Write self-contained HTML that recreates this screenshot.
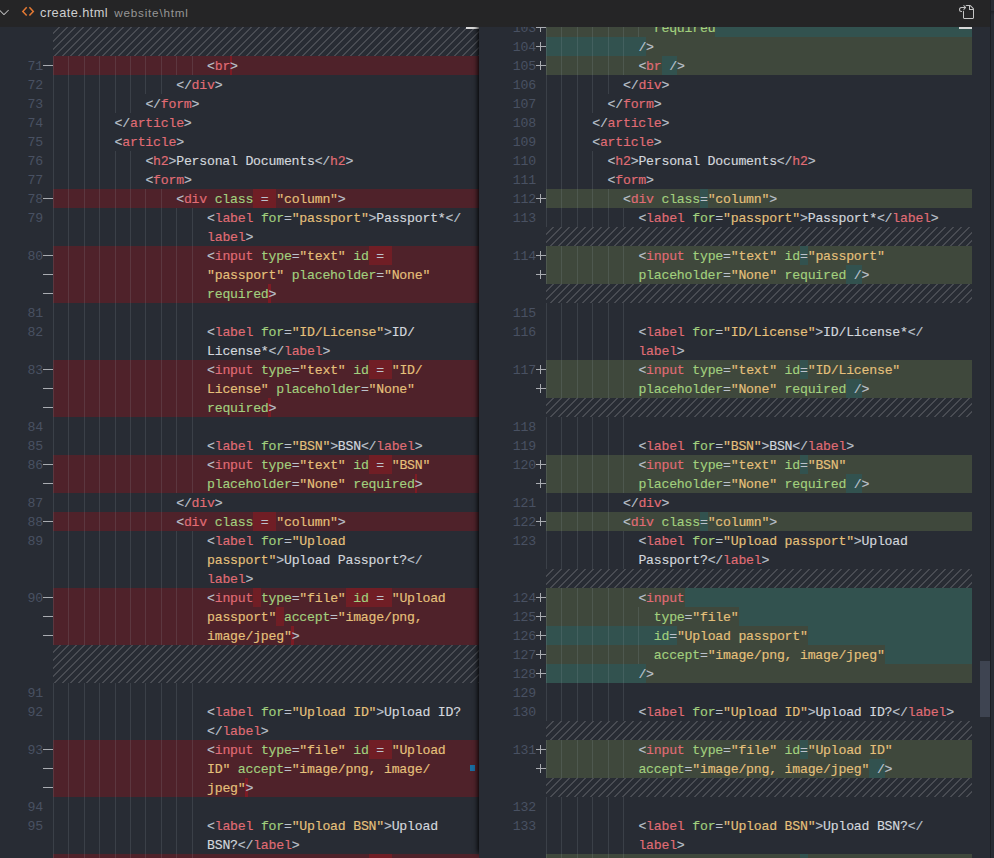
<!DOCTYPE html>
<html lang="en"><head><meta charset="utf-8"><title>create.html diff</title>
<style>
html,body{margin:0;padding:0;background:#282c34;}
body{width:994px;height:858px;overflow:hidden;position:relative;font-family:"Liberation Mono","DejaVu Sans Mono",monospace;}
#ed{position:absolute;left:0;top:0;width:994px;height:858px;overflow:hidden;background:#282c34;}
#hd{position:absolute;left:0;top:0;width:990px;height:26px;background:#252526;z-index:10;border-bottom:1px solid #252527;overflow:hidden;}
#edge{position:absolute;left:990px;top:0;width:4px;height:858px;background:#282c34;z-index:11;border-left:1px solid #1c1f24;box-sizing:border-box;}
#edge i{position:absolute;left:0;top:11px;width:3px;height:4px;background:linear-gradient(#1d2026,#282c34);}
#hd .ttl{position:absolute;left:40.1px;top:0;line-height:25px;font-family:"Liberation Sans",sans-serif;font-size:12.8px;color:#cfcfcf;white-space:pre;letter-spacing:0.43px;}
#hd .sub{position:absolute;left:114.3px;top:0;line-height:25.5px;font-family:"Liberation Sans",sans-serif;font-size:11.7px;color:#969696;white-space:pre;letter-spacing:0.78px;}
.cl{position:absolute;height:19px;line-height:19px;font-size:13.2px;letter-spacing:-0.2213px;white-space:pre;color:#d3d7dd;-webkit-text-stroke:0.15px;}
.p{color:#bcc2cc}.t{color:#e06c75}.a{color:#a2d07e}.s{color:#e5c07b}.x{color:#d3d7dd}
.ln{position:absolute;height:19px;line-height:19px;font-size:13.2px;letter-spacing:-0.2213px;color:#495162;white-space:pre;}
.mh{position:absolute;width:9.8px;height:1px;background:#a9acb1;}
.mv{position:absolute;width:1px;height:9px;background:#a9acb1;}
.rm{position:absolute;height:19px;background:#4f222a;}
.rmc{position:absolute;height:19px;background:#701e25;}
.rmc.sl{background:#7d1b24;}
.ad{position:absolute;height:19px;background:#3f483c;}
.adc{position:absolute;height:19px;background:#32524f;}
.hatch{position:absolute;background-image:linear-gradient(-45deg,rgba(204,204,204,.2) 12.5%,transparent 12.5%,transparent 50%,rgba(204,204,204,.2) 50%,rgba(204,204,204,.2) 62.5%,transparent 62.5%,transparent 100%);background-size:8px 8px;}
.g{position:absolute;width:1px;height:19px;background:rgba(171,178,191,.15);}
#rp{position:absolute;left:479px;top:0;width:515px;height:858px;background:#282c34;box-shadow:-6px 0 5px -5px #000;}
</style></head><body>
<div id="ed">
<div id="lp">
<div class="hatch" style="left:53px;top:18px;width:426px;height:38px"></div>
<div class="rm" style="left:53px;top:56px;width:426px"></div>
<div class="rmc sl" style="left:229.8px;top:56px;width:2.6px"></div>
<i class="g" style="left:53px;top:56px"></i>
<i class="g" style="left:68px;top:56px"></i>
<i class="g" style="left:84px;top:56px"></i>
<i class="g" style="left:99px;top:56px"></i>
<i class="g" style="left:115px;top:56px"></i>
<i class="g" style="left:130px;top:56px"></i>
<i class="g" style="left:145px;top:56px"></i>
<i class="g" style="left:161px;top:56px"></i>
<i class="g" style="left:176px;top:56px"></i>
<i class="g" style="left:192px;top:56px"></i>
<span class="ln" style="right:951.1px;top:57px">71</span>
<i class="mh" style="left:43.2px;top:65px"></i>
<div class="cl" style="left:207px;top:57px"><span class="p">&lt;</span><span class="t">br</span><span class="p">&gt;</span></div>
<i class="g" style="left:53px;top:75px"></i>
<i class="g" style="left:68px;top:75px"></i>
<i class="g" style="left:84px;top:75px"></i>
<i class="g" style="left:99px;top:75px"></i>
<i class="g" style="left:115px;top:75px"></i>
<i class="g" style="left:130px;top:75px"></i>
<i class="g" style="left:145px;top:75px"></i>
<i class="g" style="left:161px;top:75px"></i>
<span class="ln" style="right:951.1px;top:76px">72</span>
<div class="cl" style="left:176.2px;top:76px"><span class="p">&lt;/</span><span class="t">div</span><span class="p">&gt;</span></div>
<i class="g" style="left:53px;top:94px"></i>
<i class="g" style="left:68px;top:94px"></i>
<i class="g" style="left:84px;top:94px"></i>
<i class="g" style="left:99px;top:94px"></i>
<i class="g" style="left:115px;top:94px"></i>
<i class="g" style="left:130px;top:94px"></i>
<span class="ln" style="right:951.1px;top:95px">73</span>
<div class="cl" style="left:145.4px;top:95px"><span class="p">&lt;/</span><span class="t">form</span><span class="p">&gt;</span></div>
<i class="g" style="left:53px;top:113px"></i>
<i class="g" style="left:68px;top:113px"></i>
<i class="g" style="left:84px;top:113px"></i>
<i class="g" style="left:99px;top:113px"></i>
<span class="ln" style="right:951.1px;top:114px">74</span>
<div class="cl" style="left:114.6px;top:114px"><span class="p">&lt;/</span><span class="t">article</span><span class="p">&gt;</span></div>
<i class="g" style="left:53px;top:132px"></i>
<i class="g" style="left:68px;top:132px"></i>
<i class="g" style="left:84px;top:132px"></i>
<i class="g" style="left:99px;top:132px"></i>
<span class="ln" style="right:951.1px;top:133px">75</span>
<div class="cl" style="left:114.6px;top:133px"><span class="p">&lt;</span><span class="t">article</span><span class="p">&gt;</span></div>
<i class="g" style="left:53px;top:151px"></i>
<i class="g" style="left:68px;top:151px"></i>
<i class="g" style="left:84px;top:151px"></i>
<i class="g" style="left:99px;top:151px"></i>
<i class="g" style="left:115px;top:151px"></i>
<i class="g" style="left:130px;top:151px"></i>
<span class="ln" style="right:951.1px;top:152px">76</span>
<div class="cl" style="left:145.4px;top:152px"><span class="p">&lt;</span><span class="t">h2</span><span class="p">&gt;</span><span class="x">Personal Documents</span><span class="p">&lt;/</span><span class="t">h2</span><span class="p">&gt;</span></div>
<i class="g" style="left:53px;top:170px"></i>
<i class="g" style="left:68px;top:170px"></i>
<i class="g" style="left:84px;top:170px"></i>
<i class="g" style="left:99px;top:170px"></i>
<i class="g" style="left:115px;top:170px"></i>
<i class="g" style="left:130px;top:170px"></i>
<span class="ln" style="right:951.1px;top:171px">77</span>
<div class="cl" style="left:145.4px;top:171px"><span class="p">&lt;</span><span class="t">form</span><span class="p">&gt;</span></div>
<div class="rm" style="left:53px;top:189px;width:426px"></div>
<div class="rmc" style="left:253.2px;top:189px;width:23.1px"></div>
<i class="g" style="left:53px;top:189px"></i>
<i class="g" style="left:68px;top:189px"></i>
<i class="g" style="left:84px;top:189px"></i>
<i class="g" style="left:99px;top:189px"></i>
<i class="g" style="left:115px;top:189px"></i>
<i class="g" style="left:130px;top:189px"></i>
<i class="g" style="left:145px;top:189px"></i>
<i class="g" style="left:161px;top:189px"></i>
<span class="ln" style="right:951.1px;top:190px">78</span>
<i class="mh" style="left:43.2px;top:198px"></i>
<div class="cl" style="left:176.2px;top:190px"><span class="p">&lt;</span><span class="t">div</span><span class="x"> </span><span class="a">class</span><span class="x"> </span><span class="p">=</span><span class="x"> </span><span class="s">"column"</span><span class="p">&gt;</span></div>
<i class="g" style="left:53px;top:208px"></i>
<i class="g" style="left:68px;top:208px"></i>
<i class="g" style="left:84px;top:208px"></i>
<i class="g" style="left:99px;top:208px"></i>
<i class="g" style="left:115px;top:208px"></i>
<i class="g" style="left:130px;top:208px"></i>
<i class="g" style="left:145px;top:208px"></i>
<i class="g" style="left:161px;top:208px"></i>
<i class="g" style="left:176px;top:208px"></i>
<i class="g" style="left:192px;top:208px"></i>
<span class="ln" style="right:951.1px;top:209px">79</span>
<div class="cl" style="left:207px;top:209px"><span class="p">&lt;</span><span class="t">label</span><span class="x"> </span><span class="a">for</span><span class="p">=</span><span class="s">"passport"</span><span class="p">&gt;</span><span class="x">Passport*</span><span class="p">&lt;/</span></div>
<i class="g" style="left:53px;top:227px"></i>
<i class="g" style="left:68px;top:227px"></i>
<i class="g" style="left:84px;top:227px"></i>
<i class="g" style="left:99px;top:227px"></i>
<i class="g" style="left:115px;top:227px"></i>
<i class="g" style="left:130px;top:227px"></i>
<i class="g" style="left:145px;top:227px"></i>
<i class="g" style="left:161px;top:227px"></i>
<i class="g" style="left:176px;top:227px"></i>
<i class="g" style="left:192px;top:227px"></i>
<div class="cl" style="left:207px;top:228px"><span class="t">label</span><span class="p">&gt;</span></div>
<div class="rm" style="left:53px;top:246px;width:426px"></div>
<div class="rmc" style="left:368.7px;top:246px;width:23.1px"></div>
<i class="g" style="left:53px;top:246px"></i>
<i class="g" style="left:68px;top:246px"></i>
<i class="g" style="left:84px;top:246px"></i>
<i class="g" style="left:99px;top:246px"></i>
<i class="g" style="left:115px;top:246px"></i>
<i class="g" style="left:130px;top:246px"></i>
<i class="g" style="left:145px;top:246px"></i>
<i class="g" style="left:161px;top:246px"></i>
<i class="g" style="left:176px;top:246px"></i>
<i class="g" style="left:192px;top:246px"></i>
<span class="ln" style="right:951.1px;top:247px">80</span>
<i class="mh" style="left:43.2px;top:255px"></i>
<div class="cl" style="left:207px;top:247px"><span class="p">&lt;</span><span class="t">input</span><span class="x"> </span><span class="a">type</span><span class="p">=</span><span class="s">"text"</span><span class="x"> </span><span class="a">id</span><span class="x"> </span><span class="p">=</span><span class="x"> </span></div>
<div class="rm" style="left:53px;top:265px;width:426px"></div>
<i class="g" style="left:53px;top:265px"></i>
<i class="g" style="left:68px;top:265px"></i>
<i class="g" style="left:84px;top:265px"></i>
<i class="g" style="left:99px;top:265px"></i>
<i class="g" style="left:115px;top:265px"></i>
<i class="g" style="left:130px;top:265px"></i>
<i class="g" style="left:145px;top:265px"></i>
<i class="g" style="left:161px;top:265px"></i>
<i class="g" style="left:176px;top:265px"></i>
<i class="g" style="left:192px;top:265px"></i>
<i class="mh" style="left:43.2px;top:274px"></i>
<div class="cl" style="left:207px;top:266px"><span class="s">"passport"</span><span class="x"> </span><span class="a">placeholder</span><span class="p">=</span><span class="s">"None"</span><span class="x"> </span></div>
<div class="rm" style="left:53px;top:284px;width:426px"></div>
<div class="rmc sl" style="left:268.3px;top:284px;width:2.6px"></div>
<i class="g" style="left:53px;top:284px"></i>
<i class="g" style="left:68px;top:284px"></i>
<i class="g" style="left:84px;top:284px"></i>
<i class="g" style="left:99px;top:284px"></i>
<i class="g" style="left:115px;top:284px"></i>
<i class="g" style="left:130px;top:284px"></i>
<i class="g" style="left:145px;top:284px"></i>
<i class="g" style="left:161px;top:284px"></i>
<i class="g" style="left:176px;top:284px"></i>
<i class="g" style="left:192px;top:284px"></i>
<i class="mh" style="left:43.2px;top:293px"></i>
<div class="cl" style="left:207px;top:285px"><span class="a">required</span><span class="p">&gt;</span></div>
<i class="g" style="left:53px;top:303px"></i>
<i class="g" style="left:68px;top:303px"></i>
<i class="g" style="left:84px;top:303px"></i>
<i class="g" style="left:99px;top:303px"></i>
<i class="g" style="left:115px;top:303px"></i>
<i class="g" style="left:130px;top:303px"></i>
<i class="g" style="left:145px;top:303px"></i>
<i class="g" style="left:161px;top:303px"></i>
<i class="g" style="left:176px;top:303px"></i>
<i class="g" style="left:192px;top:303px"></i>
<span class="ln" style="right:951.1px;top:304px">81</span>
<i class="g" style="left:53px;top:322px"></i>
<i class="g" style="left:68px;top:322px"></i>
<i class="g" style="left:84px;top:322px"></i>
<i class="g" style="left:99px;top:322px"></i>
<i class="g" style="left:115px;top:322px"></i>
<i class="g" style="left:130px;top:322px"></i>
<i class="g" style="left:145px;top:322px"></i>
<i class="g" style="left:161px;top:322px"></i>
<i class="g" style="left:176px;top:322px"></i>
<i class="g" style="left:192px;top:322px"></i>
<span class="ln" style="right:951.1px;top:323px">82</span>
<div class="cl" style="left:207px;top:323px"><span class="p">&lt;</span><span class="t">label</span><span class="x"> </span><span class="a">for</span><span class="p">=</span><span class="s">"ID/License"</span><span class="p">&gt;</span><span class="x">ID/</span></div>
<i class="g" style="left:53px;top:341px"></i>
<i class="g" style="left:68px;top:341px"></i>
<i class="g" style="left:84px;top:341px"></i>
<i class="g" style="left:99px;top:341px"></i>
<i class="g" style="left:115px;top:341px"></i>
<i class="g" style="left:130px;top:341px"></i>
<i class="g" style="left:145px;top:341px"></i>
<i class="g" style="left:161px;top:341px"></i>
<i class="g" style="left:176px;top:341px"></i>
<i class="g" style="left:192px;top:341px"></i>
<div class="cl" style="left:207px;top:342px"><span class="x">License*</span><span class="p">&lt;/</span><span class="t">label</span><span class="p">&gt;</span></div>
<div class="rm" style="left:53px;top:360px;width:426px"></div>
<div class="rmc" style="left:368.7px;top:360px;width:23.1px"></div>
<i class="g" style="left:53px;top:360px"></i>
<i class="g" style="left:68px;top:360px"></i>
<i class="g" style="left:84px;top:360px"></i>
<i class="g" style="left:99px;top:360px"></i>
<i class="g" style="left:115px;top:360px"></i>
<i class="g" style="left:130px;top:360px"></i>
<i class="g" style="left:145px;top:360px"></i>
<i class="g" style="left:161px;top:360px"></i>
<i class="g" style="left:176px;top:360px"></i>
<i class="g" style="left:192px;top:360px"></i>
<span class="ln" style="right:951.1px;top:361px">83</span>
<i class="mh" style="left:43.2px;top:369px"></i>
<div class="cl" style="left:207px;top:361px"><span class="p">&lt;</span><span class="t">input</span><span class="x"> </span><span class="a">type</span><span class="p">=</span><span class="s">"text"</span><span class="x"> </span><span class="a">id</span><span class="x"> </span><span class="p">=</span><span class="x"> </span><span class="s">"ID/</span></div>
<div class="rm" style="left:53px;top:379px;width:426px"></div>
<i class="g" style="left:53px;top:379px"></i>
<i class="g" style="left:68px;top:379px"></i>
<i class="g" style="left:84px;top:379px"></i>
<i class="g" style="left:99px;top:379px"></i>
<i class="g" style="left:115px;top:379px"></i>
<i class="g" style="left:130px;top:379px"></i>
<i class="g" style="left:145px;top:379px"></i>
<i class="g" style="left:161px;top:379px"></i>
<i class="g" style="left:176px;top:379px"></i>
<i class="g" style="left:192px;top:379px"></i>
<i class="mh" style="left:43.2px;top:388px"></i>
<div class="cl" style="left:207px;top:380px"><span class="s">License"</span><span class="x"> </span><span class="a">placeholder</span><span class="p">=</span><span class="s">"None"</span><span class="x"> </span></div>
<div class="rm" style="left:53px;top:398px;width:426px"></div>
<div class="rmc sl" style="left:268.3px;top:398px;width:2.6px"></div>
<i class="g" style="left:53px;top:398px"></i>
<i class="g" style="left:68px;top:398px"></i>
<i class="g" style="left:84px;top:398px"></i>
<i class="g" style="left:99px;top:398px"></i>
<i class="g" style="left:115px;top:398px"></i>
<i class="g" style="left:130px;top:398px"></i>
<i class="g" style="left:145px;top:398px"></i>
<i class="g" style="left:161px;top:398px"></i>
<i class="g" style="left:176px;top:398px"></i>
<i class="g" style="left:192px;top:398px"></i>
<i class="mh" style="left:43.2px;top:407px"></i>
<div class="cl" style="left:207px;top:399px"><span class="a">required</span><span class="p">&gt;</span></div>
<i class="g" style="left:53px;top:417px"></i>
<i class="g" style="left:68px;top:417px"></i>
<i class="g" style="left:84px;top:417px"></i>
<i class="g" style="left:99px;top:417px"></i>
<i class="g" style="left:115px;top:417px"></i>
<i class="g" style="left:130px;top:417px"></i>
<i class="g" style="left:145px;top:417px"></i>
<i class="g" style="left:161px;top:417px"></i>
<i class="g" style="left:176px;top:417px"></i>
<i class="g" style="left:192px;top:417px"></i>
<span class="ln" style="right:951.1px;top:418px">84</span>
<i class="g" style="left:53px;top:436px"></i>
<i class="g" style="left:68px;top:436px"></i>
<i class="g" style="left:84px;top:436px"></i>
<i class="g" style="left:99px;top:436px"></i>
<i class="g" style="left:115px;top:436px"></i>
<i class="g" style="left:130px;top:436px"></i>
<i class="g" style="left:145px;top:436px"></i>
<i class="g" style="left:161px;top:436px"></i>
<i class="g" style="left:176px;top:436px"></i>
<i class="g" style="left:192px;top:436px"></i>
<span class="ln" style="right:951.1px;top:437px">85</span>
<div class="cl" style="left:207px;top:437px"><span class="p">&lt;</span><span class="t">label</span><span class="x"> </span><span class="a">for</span><span class="p">=</span><span class="s">"BSN"</span><span class="p">&gt;</span><span class="x">BSN</span><span class="p">&lt;/</span><span class="t">label</span><span class="p">&gt;</span></div>
<div class="rm" style="left:53px;top:455px;width:426px"></div>
<div class="rmc" style="left:368.7px;top:455px;width:23.1px"></div>
<i class="g" style="left:53px;top:455px"></i>
<i class="g" style="left:68px;top:455px"></i>
<i class="g" style="left:84px;top:455px"></i>
<i class="g" style="left:99px;top:455px"></i>
<i class="g" style="left:115px;top:455px"></i>
<i class="g" style="left:130px;top:455px"></i>
<i class="g" style="left:145px;top:455px"></i>
<i class="g" style="left:161px;top:455px"></i>
<i class="g" style="left:176px;top:455px"></i>
<i class="g" style="left:192px;top:455px"></i>
<span class="ln" style="right:951.1px;top:456px">86</span>
<i class="mh" style="left:43.2px;top:464px"></i>
<div class="cl" style="left:207px;top:456px"><span class="p">&lt;</span><span class="t">input</span><span class="x"> </span><span class="a">type</span><span class="p">=</span><span class="s">"text"</span><span class="x"> </span><span class="a">id</span><span class="x"> </span><span class="p">=</span><span class="x"> </span><span class="s">"BSN"</span><span class="x"> </span></div>
<div class="rm" style="left:53px;top:474px;width:426px"></div>
<div class="rmc sl" style="left:414.6px;top:474px;width:2.6px"></div>
<i class="g" style="left:53px;top:474px"></i>
<i class="g" style="left:68px;top:474px"></i>
<i class="g" style="left:84px;top:474px"></i>
<i class="g" style="left:99px;top:474px"></i>
<i class="g" style="left:115px;top:474px"></i>
<i class="g" style="left:130px;top:474px"></i>
<i class="g" style="left:145px;top:474px"></i>
<i class="g" style="left:161px;top:474px"></i>
<i class="g" style="left:176px;top:474px"></i>
<i class="g" style="left:192px;top:474px"></i>
<i class="mh" style="left:43.2px;top:483px"></i>
<div class="cl" style="left:207px;top:475px"><span class="a">placeholder</span><span class="p">=</span><span class="s">"None"</span><span class="x"> </span><span class="a">required</span><span class="p">&gt;</span></div>
<i class="g" style="left:53px;top:493px"></i>
<i class="g" style="left:68px;top:493px"></i>
<i class="g" style="left:84px;top:493px"></i>
<i class="g" style="left:99px;top:493px"></i>
<i class="g" style="left:115px;top:493px"></i>
<i class="g" style="left:130px;top:493px"></i>
<i class="g" style="left:145px;top:493px"></i>
<i class="g" style="left:161px;top:493px"></i>
<span class="ln" style="right:951.1px;top:494px">87</span>
<div class="cl" style="left:176.2px;top:494px"><span class="p">&lt;/</span><span class="t">div</span><span class="p">&gt;</span></div>
<div class="rm" style="left:53px;top:512px;width:426px"></div>
<div class="rmc" style="left:253.2px;top:512px;width:23.1px"></div>
<i class="g" style="left:53px;top:512px"></i>
<i class="g" style="left:68px;top:512px"></i>
<i class="g" style="left:84px;top:512px"></i>
<i class="g" style="left:99px;top:512px"></i>
<i class="g" style="left:115px;top:512px"></i>
<i class="g" style="left:130px;top:512px"></i>
<i class="g" style="left:145px;top:512px"></i>
<i class="g" style="left:161px;top:512px"></i>
<span class="ln" style="right:951.1px;top:513px">88</span>
<i class="mh" style="left:43.2px;top:521px"></i>
<div class="cl" style="left:176.2px;top:513px"><span class="p">&lt;</span><span class="t">div</span><span class="x"> </span><span class="a">class</span><span class="x"> </span><span class="p">=</span><span class="x"> </span><span class="s">"column"</span><span class="p">&gt;</span></div>
<i class="g" style="left:53px;top:531px"></i>
<i class="g" style="left:68px;top:531px"></i>
<i class="g" style="left:84px;top:531px"></i>
<i class="g" style="left:99px;top:531px"></i>
<i class="g" style="left:115px;top:531px"></i>
<i class="g" style="left:130px;top:531px"></i>
<i class="g" style="left:145px;top:531px"></i>
<i class="g" style="left:161px;top:531px"></i>
<i class="g" style="left:176px;top:531px"></i>
<i class="g" style="left:192px;top:531px"></i>
<span class="ln" style="right:951.1px;top:532px">89</span>
<div class="cl" style="left:207px;top:532px"><span class="p">&lt;</span><span class="t">label</span><span class="x"> </span><span class="a">for</span><span class="p">=</span><span class="s">"Upload </span></div>
<i class="g" style="left:53px;top:550px"></i>
<i class="g" style="left:68px;top:550px"></i>
<i class="g" style="left:84px;top:550px"></i>
<i class="g" style="left:99px;top:550px"></i>
<i class="g" style="left:115px;top:550px"></i>
<i class="g" style="left:130px;top:550px"></i>
<i class="g" style="left:145px;top:550px"></i>
<i class="g" style="left:161px;top:550px"></i>
<i class="g" style="left:176px;top:550px"></i>
<i class="g" style="left:192px;top:550px"></i>
<div class="cl" style="left:207px;top:551px"><span class="s">passport"</span><span class="p">&gt;</span><span class="x">Upload Passport?</span><span class="p">&lt;/</span></div>
<i class="g" style="left:53px;top:569px"></i>
<i class="g" style="left:68px;top:569px"></i>
<i class="g" style="left:84px;top:569px"></i>
<i class="g" style="left:99px;top:569px"></i>
<i class="g" style="left:115px;top:569px"></i>
<i class="g" style="left:130px;top:569px"></i>
<i class="g" style="left:145px;top:569px"></i>
<i class="g" style="left:161px;top:569px"></i>
<i class="g" style="left:176px;top:569px"></i>
<i class="g" style="left:192px;top:569px"></i>
<div class="cl" style="left:207px;top:570px"><span class="t">label</span><span class="p">&gt;</span></div>
<div class="rm" style="left:53px;top:588px;width:426px"></div>
<div class="rmc" style="left:253.2px;top:588px;width:7.7px"></div>
<div class="rmc" style="left:345.6px;top:588px;width:46.2px"></div>
<i class="g" style="left:53px;top:588px"></i>
<i class="g" style="left:68px;top:588px"></i>
<i class="g" style="left:84px;top:588px"></i>
<i class="g" style="left:99px;top:588px"></i>
<i class="g" style="left:115px;top:588px"></i>
<i class="g" style="left:130px;top:588px"></i>
<i class="g" style="left:145px;top:588px"></i>
<i class="g" style="left:161px;top:588px"></i>
<i class="g" style="left:176px;top:588px"></i>
<i class="g" style="left:192px;top:588px"></i>
<span class="ln" style="right:951.1px;top:589px">90</span>
<i class="mh" style="left:43.2px;top:597px"></i>
<div class="cl" style="left:207px;top:589px"><span class="p">&lt;</span><span class="t">input</span><span class="x"> </span><span class="a">type</span><span class="p">=</span><span class="s">"file"</span><span class="x"> </span><span class="a">id</span><span class="x"> </span><span class="p">=</span><span class="x"> </span><span class="s">"Upload </span></div>
<div class="rm" style="left:53px;top:607px;width:426px"></div>
<div class="rmc" style="left:276.3px;top:607px;width:7.7px"></div>
<i class="g" style="left:53px;top:607px"></i>
<i class="g" style="left:68px;top:607px"></i>
<i class="g" style="left:84px;top:607px"></i>
<i class="g" style="left:99px;top:607px"></i>
<i class="g" style="left:115px;top:607px"></i>
<i class="g" style="left:130px;top:607px"></i>
<i class="g" style="left:145px;top:607px"></i>
<i class="g" style="left:161px;top:607px"></i>
<i class="g" style="left:176px;top:607px"></i>
<i class="g" style="left:192px;top:607px"></i>
<i class="mh" style="left:43.2px;top:616px"></i>
<div class="cl" style="left:207px;top:608px"><span class="s">passport"</span><span class="x"> </span><span class="a">accept</span><span class="p">=</span><span class="s">"image/png, </span></div>
<div class="rm" style="left:53px;top:626px;width:426px"></div>
<div class="rmc sl" style="left:291.4px;top:626px;width:2.6px"></div>
<i class="g" style="left:53px;top:626px"></i>
<i class="g" style="left:68px;top:626px"></i>
<i class="g" style="left:84px;top:626px"></i>
<i class="g" style="left:99px;top:626px"></i>
<i class="g" style="left:115px;top:626px"></i>
<i class="g" style="left:130px;top:626px"></i>
<i class="g" style="left:145px;top:626px"></i>
<i class="g" style="left:161px;top:626px"></i>
<i class="g" style="left:176px;top:626px"></i>
<i class="g" style="left:192px;top:626px"></i>
<i class="mh" style="left:43.2px;top:635px"></i>
<div class="cl" style="left:207px;top:627px"><span class="s">image/jpeg"</span><span class="p">&gt;</span></div>
<div class="hatch" style="left:53px;top:645px;width:426px;height:38px"></div>
<i class="g" style="left:53px;top:683px"></i>
<i class="g" style="left:68px;top:683px"></i>
<i class="g" style="left:84px;top:683px"></i>
<i class="g" style="left:99px;top:683px"></i>
<i class="g" style="left:115px;top:683px"></i>
<i class="g" style="left:130px;top:683px"></i>
<i class="g" style="left:145px;top:683px"></i>
<i class="g" style="left:161px;top:683px"></i>
<i class="g" style="left:176px;top:683px"></i>
<i class="g" style="left:192px;top:683px"></i>
<span class="ln" style="right:951.1px;top:684px">91</span>
<i class="g" style="left:53px;top:702px"></i>
<i class="g" style="left:68px;top:702px"></i>
<i class="g" style="left:84px;top:702px"></i>
<i class="g" style="left:99px;top:702px"></i>
<i class="g" style="left:115px;top:702px"></i>
<i class="g" style="left:130px;top:702px"></i>
<i class="g" style="left:145px;top:702px"></i>
<i class="g" style="left:161px;top:702px"></i>
<i class="g" style="left:176px;top:702px"></i>
<i class="g" style="left:192px;top:702px"></i>
<span class="ln" style="right:951.1px;top:703px">92</span>
<div class="cl" style="left:207px;top:703px"><span class="p">&lt;</span><span class="t">label</span><span class="x"> </span><span class="a">for</span><span class="p">=</span><span class="s">"Upload ID"</span><span class="p">&gt;</span><span class="x">Upload ID?</span></div>
<i class="g" style="left:53px;top:721px"></i>
<i class="g" style="left:68px;top:721px"></i>
<i class="g" style="left:84px;top:721px"></i>
<i class="g" style="left:99px;top:721px"></i>
<i class="g" style="left:115px;top:721px"></i>
<i class="g" style="left:130px;top:721px"></i>
<i class="g" style="left:145px;top:721px"></i>
<i class="g" style="left:161px;top:721px"></i>
<i class="g" style="left:176px;top:721px"></i>
<i class="g" style="left:192px;top:721px"></i>
<div class="cl" style="left:207px;top:722px"><span class="p">&lt;/</span><span class="t">label</span><span class="p">&gt;</span></div>
<div class="rm" style="left:53px;top:740px;width:426px"></div>
<div class="rmc" style="left:368.7px;top:740px;width:23.1px"></div>
<i class="g" style="left:53px;top:740px"></i>
<i class="g" style="left:68px;top:740px"></i>
<i class="g" style="left:84px;top:740px"></i>
<i class="g" style="left:99px;top:740px"></i>
<i class="g" style="left:115px;top:740px"></i>
<i class="g" style="left:130px;top:740px"></i>
<i class="g" style="left:145px;top:740px"></i>
<i class="g" style="left:161px;top:740px"></i>
<i class="g" style="left:176px;top:740px"></i>
<i class="g" style="left:192px;top:740px"></i>
<span class="ln" style="right:951.1px;top:741px">93</span>
<i class="mh" style="left:43.2px;top:749px"></i>
<div class="cl" style="left:207px;top:741px"><span class="p">&lt;</span><span class="t">input</span><span class="x"> </span><span class="a">type</span><span class="p">=</span><span class="s">"file"</span><span class="x"> </span><span class="a">id</span><span class="x"> </span><span class="p">=</span><span class="x"> </span><span class="s">"Upload </span></div>
<div class="rm" style="left:53px;top:759px;width:426px"></div>
<i class="g" style="left:53px;top:759px"></i>
<i class="g" style="left:68px;top:759px"></i>
<i class="g" style="left:84px;top:759px"></i>
<i class="g" style="left:99px;top:759px"></i>
<i class="g" style="left:115px;top:759px"></i>
<i class="g" style="left:130px;top:759px"></i>
<i class="g" style="left:145px;top:759px"></i>
<i class="g" style="left:161px;top:759px"></i>
<i class="g" style="left:176px;top:759px"></i>
<i class="g" style="left:192px;top:759px"></i>
<i class="mh" style="left:43.2px;top:768px"></i>
<div class="cl" style="left:207px;top:760px"><span class="s">ID"</span><span class="x"> </span><span class="a">accept</span><span class="p">=</span><span class="s">"image/png, image/</span></div>
<div class="rm" style="left:53px;top:778px;width:426px"></div>
<div class="rmc sl" style="left:245.2px;top:778px;width:2.6px"></div>
<i class="g" style="left:53px;top:778px"></i>
<i class="g" style="left:68px;top:778px"></i>
<i class="g" style="left:84px;top:778px"></i>
<i class="g" style="left:99px;top:778px"></i>
<i class="g" style="left:115px;top:778px"></i>
<i class="g" style="left:130px;top:778px"></i>
<i class="g" style="left:145px;top:778px"></i>
<i class="g" style="left:161px;top:778px"></i>
<i class="g" style="left:176px;top:778px"></i>
<i class="g" style="left:192px;top:778px"></i>
<i class="mh" style="left:43.2px;top:787px"></i>
<div class="cl" style="left:207px;top:779px"><span class="s">jpeg"</span><span class="p">&gt;</span></div>
<i class="g" style="left:53px;top:797px"></i>
<i class="g" style="left:68px;top:797px"></i>
<i class="g" style="left:84px;top:797px"></i>
<i class="g" style="left:99px;top:797px"></i>
<i class="g" style="left:115px;top:797px"></i>
<i class="g" style="left:130px;top:797px"></i>
<i class="g" style="left:145px;top:797px"></i>
<i class="g" style="left:161px;top:797px"></i>
<i class="g" style="left:176px;top:797px"></i>
<i class="g" style="left:192px;top:797px"></i>
<span class="ln" style="right:951.1px;top:798px">94</span>
<i class="g" style="left:53px;top:816px"></i>
<i class="g" style="left:68px;top:816px"></i>
<i class="g" style="left:84px;top:816px"></i>
<i class="g" style="left:99px;top:816px"></i>
<i class="g" style="left:115px;top:816px"></i>
<i class="g" style="left:130px;top:816px"></i>
<i class="g" style="left:145px;top:816px"></i>
<i class="g" style="left:161px;top:816px"></i>
<i class="g" style="left:176px;top:816px"></i>
<i class="g" style="left:192px;top:816px"></i>
<span class="ln" style="right:951.1px;top:817px">95</span>
<div class="cl" style="left:207px;top:817px"><span class="p">&lt;</span><span class="t">label</span><span class="x"> </span><span class="a">for</span><span class="p">=</span><span class="s">"Upload BSN"</span><span class="p">&gt;</span><span class="x">Upload </span></div>
<i class="g" style="left:53px;top:835px"></i>
<i class="g" style="left:68px;top:835px"></i>
<i class="g" style="left:84px;top:835px"></i>
<i class="g" style="left:99px;top:835px"></i>
<i class="g" style="left:115px;top:835px"></i>
<i class="g" style="left:130px;top:835px"></i>
<i class="g" style="left:145px;top:835px"></i>
<i class="g" style="left:161px;top:835px"></i>
<i class="g" style="left:176px;top:835px"></i>
<i class="g" style="left:192px;top:835px"></i>
<div class="cl" style="left:207px;top:836px"><span class="x">BSN?</span><span class="p">&lt;/</span><span class="t">label</span><span class="p">&gt;</span></div>
<div class="rm" style="left:53px;top:854px;width:426px"></div>
<div class="rmc" style="left:368.7px;top:854px;width:23.1px"></div>
<i class="g" style="left:53px;top:854px"></i>
<i class="g" style="left:68px;top:854px"></i>
<i class="g" style="left:84px;top:854px"></i>
<i class="g" style="left:99px;top:854px"></i>
<i class="g" style="left:115px;top:854px"></i>
<i class="g" style="left:130px;top:854px"></i>
<i class="g" style="left:145px;top:854px"></i>
<i class="g" style="left:161px;top:854px"></i>
<i class="g" style="left:176px;top:854px"></i>
<i class="g" style="left:192px;top:854px"></i>
<span class="ln" style="right:951.1px;top:855px">96</span>
<i class="mh" style="left:43.2px;top:863px"></i>
<div class="cl" style="left:207px;top:855px"><span class="p">&lt;</span><span class="t">input</span><span class="x"> </span><span class="a">type</span><span class="p">=</span><span class="s">"file"</span><span class="x"> </span><span class="a">id</span><span class="x"> </span><span class="p">=</span><span class="x"> </span><span class="s">"Upload </span></div>
<div style="position:absolute;left:466px;top:27px;width:13px;height:2px;background:#d9d9d9"></div>
<div style="position:absolute;left:470px;top:765px;width:5px;height:6px;background:#1a6da0"></div>
</div>
<div id="rp"><div style="position:absolute;left:-479px;top:0;width:994px;height:858px">
<div class="ad" style="left:546px;top:18px;width:426px"></div>
<div class="adc" style="left:715.4px;top:18px;width:256.6px"></div>
<i class="g" style="left:546px;top:18px"></i>
<i class="g" style="left:561px;top:18px"></i>
<i class="g" style="left:577px;top:18px"></i>
<i class="g" style="left:592px;top:18px"></i>
<i class="g" style="left:608px;top:18px"></i>
<i class="g" style="left:623px;top:18px"></i>
<i class="g" style="left:638px;top:18px"></i>
<span class="ln" style="right:458.1px;top:19px">103</span>
<i class="mh" style="left:536.2px;top:27px"></i>
<i class="mv" style="left:540px;top:23px"></i>
<div class="cl" style="left:653.8px;top:19px"><span class="a">required</span></div>
<div class="ad" style="left:546px;top:37px;width:426px"></div>
<div class="adc" style="left:546px;top:37px;width:100.1px"></div>
<i class="g" style="left:546px;top:37px"></i>
<i class="g" style="left:561px;top:37px"></i>
<i class="g" style="left:577px;top:37px"></i>
<i class="g" style="left:592px;top:37px"></i>
<i class="g" style="left:608px;top:37px"></i>
<i class="g" style="left:623px;top:37px"></i>
<span class="ln" style="right:458.1px;top:38px">104</span>
<i class="mh" style="left:536.2px;top:46px"></i>
<i class="mv" style="left:540px;top:42px"></i>
<div class="cl" style="left:638.4px;top:38px"><span class="p">/&gt;</span></div>
<div class="ad" style="left:546px;top:56px;width:426px"></div>
<div class="adc" style="left:661.5px;top:56px;width:15.4px"></div>
<i class="g" style="left:546px;top:56px"></i>
<i class="g" style="left:561px;top:56px"></i>
<i class="g" style="left:577px;top:56px"></i>
<i class="g" style="left:592px;top:56px"></i>
<i class="g" style="left:608px;top:56px"></i>
<i class="g" style="left:623px;top:56px"></i>
<span class="ln" style="right:458.1px;top:57px">105</span>
<i class="mh" style="left:536.2px;top:65px"></i>
<i class="mv" style="left:540px;top:61px"></i>
<div class="cl" style="left:638.4px;top:57px"><span class="p">&lt;</span><span class="t">br</span><span class="x"> </span><span class="p">/&gt;</span></div>
<i class="g" style="left:546px;top:75px"></i>
<i class="g" style="left:561px;top:75px"></i>
<i class="g" style="left:577px;top:75px"></i>
<i class="g" style="left:592px;top:75px"></i>
<i class="g" style="left:608px;top:75px"></i>
<span class="ln" style="right:458.1px;top:76px">106</span>
<div class="cl" style="left:623px;top:76px"><span class="p">&lt;/</span><span class="t">div</span><span class="p">&gt;</span></div>
<i class="g" style="left:546px;top:94px"></i>
<i class="g" style="left:561px;top:94px"></i>
<i class="g" style="left:577px;top:94px"></i>
<i class="g" style="left:592px;top:94px"></i>
<span class="ln" style="right:458.1px;top:95px">107</span>
<div class="cl" style="left:607.6px;top:95px"><span class="p">&lt;/</span><span class="t">form</span><span class="p">&gt;</span></div>
<i class="g" style="left:546px;top:113px"></i>
<i class="g" style="left:561px;top:113px"></i>
<i class="g" style="left:577px;top:113px"></i>
<span class="ln" style="right:458.1px;top:114px">108</span>
<div class="cl" style="left:592.2px;top:114px"><span class="p">&lt;/</span><span class="t">article</span><span class="p">&gt;</span></div>
<i class="g" style="left:546px;top:132px"></i>
<i class="g" style="left:561px;top:132px"></i>
<i class="g" style="left:577px;top:132px"></i>
<span class="ln" style="right:458.1px;top:133px">109</span>
<div class="cl" style="left:592.2px;top:133px"><span class="p">&lt;</span><span class="t">article</span><span class="p">&gt;</span></div>
<i class="g" style="left:546px;top:151px"></i>
<i class="g" style="left:561px;top:151px"></i>
<i class="g" style="left:577px;top:151px"></i>
<i class="g" style="left:592px;top:151px"></i>
<span class="ln" style="right:458.1px;top:152px">110</span>
<div class="cl" style="left:607.6px;top:152px"><span class="p">&lt;</span><span class="t">h2</span><span class="p">&gt;</span><span class="x">Personal Documents</span><span class="p">&lt;/</span><span class="t">h2</span><span class="p">&gt;</span></div>
<i class="g" style="left:546px;top:170px"></i>
<i class="g" style="left:561px;top:170px"></i>
<i class="g" style="left:577px;top:170px"></i>
<i class="g" style="left:592px;top:170px"></i>
<span class="ln" style="right:458.1px;top:171px">111</span>
<div class="cl" style="left:607.6px;top:171px"><span class="p">&lt;</span><span class="t">form</span><span class="p">&gt;</span></div>
<div class="ad" style="left:546px;top:189px;width:426px"></div>
<div class="adc" style="left:700px;top:189px;width:7.7px"></div>
<i class="g" style="left:546px;top:189px"></i>
<i class="g" style="left:561px;top:189px"></i>
<i class="g" style="left:577px;top:189px"></i>
<i class="g" style="left:592px;top:189px"></i>
<i class="g" style="left:608px;top:189px"></i>
<span class="ln" style="right:458.1px;top:190px">112</span>
<i class="mh" style="left:536.2px;top:198px"></i>
<i class="mv" style="left:540px;top:194px"></i>
<div class="cl" style="left:623px;top:190px"><span class="p">&lt;</span><span class="t">div</span><span class="x"> </span><span class="a">class</span><span class="p">=</span><span class="s">"column"</span><span class="p">&gt;</span></div>
<i class="g" style="left:546px;top:208px"></i>
<i class="g" style="left:561px;top:208px"></i>
<i class="g" style="left:577px;top:208px"></i>
<i class="g" style="left:592px;top:208px"></i>
<i class="g" style="left:608px;top:208px"></i>
<i class="g" style="left:623px;top:208px"></i>
<span class="ln" style="right:458.1px;top:209px">113</span>
<div class="cl" style="left:638.4px;top:209px"><span class="p">&lt;</span><span class="t">label</span><span class="x"> </span><span class="a">for</span><span class="p">=</span><span class="s">"passport"</span><span class="p">&gt;</span><span class="x">Passport*</span><span class="p">&lt;/</span><span class="t">label</span><span class="p">&gt;</span></div>
<div class="hatch" style="left:546px;top:227px;width:426px;height:19px"></div>
<div class="ad" style="left:546px;top:246px;width:426px"></div>
<div class="adc" style="left:800.1px;top:246px;width:7.7px"></div>
<i class="g" style="left:546px;top:246px"></i>
<i class="g" style="left:561px;top:246px"></i>
<i class="g" style="left:577px;top:246px"></i>
<i class="g" style="left:592px;top:246px"></i>
<i class="g" style="left:608px;top:246px"></i>
<i class="g" style="left:623px;top:246px"></i>
<span class="ln" style="right:458.1px;top:247px">114</span>
<i class="mh" style="left:536.2px;top:255px"></i>
<i class="mv" style="left:540px;top:251px"></i>
<div class="cl" style="left:638.4px;top:247px"><span class="p">&lt;</span><span class="t">input</span><span class="x"> </span><span class="a">type</span><span class="p">=</span><span class="s">"text"</span><span class="x"> </span><span class="a">id</span><span class="p">=</span><span class="s">"passport"</span></div>
<div class="ad" style="left:546px;top:265px;width:426px"></div>
<div class="adc" style="left:846.3px;top:265px;width:15.4px"></div>
<i class="g" style="left:546px;top:265px"></i>
<i class="g" style="left:561px;top:265px"></i>
<i class="g" style="left:577px;top:265px"></i>
<i class="g" style="left:592px;top:265px"></i>
<i class="g" style="left:608px;top:265px"></i>
<i class="g" style="left:623px;top:265px"></i>
<i class="mh" style="left:536.2px;top:274px"></i>
<i class="mv" style="left:540px;top:270px"></i>
<div class="cl" style="left:638.4px;top:266px"><span class="a">placeholder</span><span class="p">=</span><span class="s">"None"</span><span class="x"> </span><span class="a">required</span><span class="x"> </span><span class="p">/&gt;</span></div>
<div class="hatch" style="left:546px;top:284px;width:426px;height:19px"></div>
<i class="g" style="left:546px;top:303px"></i>
<i class="g" style="left:561px;top:303px"></i>
<i class="g" style="left:577px;top:303px"></i>
<i class="g" style="left:592px;top:303px"></i>
<i class="g" style="left:608px;top:303px"></i>
<i class="g" style="left:623px;top:303px"></i>
<span class="ln" style="right:458.1px;top:304px">115</span>
<i class="g" style="left:546px;top:322px"></i>
<i class="g" style="left:561px;top:322px"></i>
<i class="g" style="left:577px;top:322px"></i>
<i class="g" style="left:592px;top:322px"></i>
<i class="g" style="left:608px;top:322px"></i>
<i class="g" style="left:623px;top:322px"></i>
<span class="ln" style="right:458.1px;top:323px">116</span>
<div class="cl" style="left:638.4px;top:323px"><span class="p">&lt;</span><span class="t">label</span><span class="x"> </span><span class="a">for</span><span class="p">=</span><span class="s">"ID/License"</span><span class="p">&gt;</span><span class="x">ID/License*</span><span class="p">&lt;/</span></div>
<i class="g" style="left:546px;top:341px"></i>
<i class="g" style="left:561px;top:341px"></i>
<i class="g" style="left:577px;top:341px"></i>
<i class="g" style="left:592px;top:341px"></i>
<i class="g" style="left:608px;top:341px"></i>
<i class="g" style="left:623px;top:341px"></i>
<div class="cl" style="left:638.4px;top:342px"><span class="t">label</span><span class="p">&gt;</span></div>
<div class="ad" style="left:546px;top:360px;width:426px"></div>
<div class="adc" style="left:800.1px;top:360px;width:7.7px"></div>
<i class="g" style="left:546px;top:360px"></i>
<i class="g" style="left:561px;top:360px"></i>
<i class="g" style="left:577px;top:360px"></i>
<i class="g" style="left:592px;top:360px"></i>
<i class="g" style="left:608px;top:360px"></i>
<i class="g" style="left:623px;top:360px"></i>
<span class="ln" style="right:458.1px;top:361px">117</span>
<i class="mh" style="left:536.2px;top:369px"></i>
<i class="mv" style="left:540px;top:365px"></i>
<div class="cl" style="left:638.4px;top:361px"><span class="p">&lt;</span><span class="t">input</span><span class="x"> </span><span class="a">type</span><span class="p">=</span><span class="s">"text"</span><span class="x"> </span><span class="a">id</span><span class="p">=</span><span class="s">"ID/License"</span></div>
<div class="ad" style="left:546px;top:379px;width:426px"></div>
<div class="adc" style="left:846.3px;top:379px;width:15.4px"></div>
<i class="g" style="left:546px;top:379px"></i>
<i class="g" style="left:561px;top:379px"></i>
<i class="g" style="left:577px;top:379px"></i>
<i class="g" style="left:592px;top:379px"></i>
<i class="g" style="left:608px;top:379px"></i>
<i class="g" style="left:623px;top:379px"></i>
<i class="mh" style="left:536.2px;top:388px"></i>
<i class="mv" style="left:540px;top:384px"></i>
<div class="cl" style="left:638.4px;top:380px"><span class="a">placeholder</span><span class="p">=</span><span class="s">"None"</span><span class="x"> </span><span class="a">required</span><span class="x"> </span><span class="p">/&gt;</span></div>
<div class="hatch" style="left:546px;top:398px;width:426px;height:19px"></div>
<i class="g" style="left:546px;top:417px"></i>
<i class="g" style="left:561px;top:417px"></i>
<i class="g" style="left:577px;top:417px"></i>
<i class="g" style="left:592px;top:417px"></i>
<i class="g" style="left:608px;top:417px"></i>
<i class="g" style="left:623px;top:417px"></i>
<span class="ln" style="right:458.1px;top:418px">118</span>
<i class="g" style="left:546px;top:436px"></i>
<i class="g" style="left:561px;top:436px"></i>
<i class="g" style="left:577px;top:436px"></i>
<i class="g" style="left:592px;top:436px"></i>
<i class="g" style="left:608px;top:436px"></i>
<i class="g" style="left:623px;top:436px"></i>
<span class="ln" style="right:458.1px;top:437px">119</span>
<div class="cl" style="left:638.4px;top:437px"><span class="p">&lt;</span><span class="t">label</span><span class="x"> </span><span class="a">for</span><span class="p">=</span><span class="s">"BSN"</span><span class="p">&gt;</span><span class="x">BSN</span><span class="p">&lt;/</span><span class="t">label</span><span class="p">&gt;</span></div>
<div class="ad" style="left:546px;top:455px;width:426px"></div>
<div class="adc" style="left:800.1px;top:455px;width:7.7px"></div>
<i class="g" style="left:546px;top:455px"></i>
<i class="g" style="left:561px;top:455px"></i>
<i class="g" style="left:577px;top:455px"></i>
<i class="g" style="left:592px;top:455px"></i>
<i class="g" style="left:608px;top:455px"></i>
<i class="g" style="left:623px;top:455px"></i>
<span class="ln" style="right:458.1px;top:456px">120</span>
<i class="mh" style="left:536.2px;top:464px"></i>
<i class="mv" style="left:540px;top:460px"></i>
<div class="cl" style="left:638.4px;top:456px"><span class="p">&lt;</span><span class="t">input</span><span class="x"> </span><span class="a">type</span><span class="p">=</span><span class="s">"text"</span><span class="x"> </span><span class="a">id</span><span class="p">=</span><span class="s">"BSN"</span></div>
<div class="ad" style="left:546px;top:474px;width:426px"></div>
<div class="adc" style="left:846.3px;top:474px;width:15.4px"></div>
<i class="g" style="left:546px;top:474px"></i>
<i class="g" style="left:561px;top:474px"></i>
<i class="g" style="left:577px;top:474px"></i>
<i class="g" style="left:592px;top:474px"></i>
<i class="g" style="left:608px;top:474px"></i>
<i class="g" style="left:623px;top:474px"></i>
<i class="mh" style="left:536.2px;top:483px"></i>
<i class="mv" style="left:540px;top:479px"></i>
<div class="cl" style="left:638.4px;top:475px"><span class="a">placeholder</span><span class="p">=</span><span class="s">"None"</span><span class="x"> </span><span class="a">required</span><span class="x"> </span><span class="p">/&gt;</span></div>
<i class="g" style="left:546px;top:493px"></i>
<i class="g" style="left:561px;top:493px"></i>
<i class="g" style="left:577px;top:493px"></i>
<i class="g" style="left:592px;top:493px"></i>
<i class="g" style="left:608px;top:493px"></i>
<span class="ln" style="right:458.1px;top:494px">121</span>
<div class="cl" style="left:623px;top:494px"><span class="p">&lt;/</span><span class="t">div</span><span class="p">&gt;</span></div>
<div class="ad" style="left:546px;top:512px;width:426px"></div>
<div class="adc" style="left:700px;top:512px;width:7.7px"></div>
<i class="g" style="left:546px;top:512px"></i>
<i class="g" style="left:561px;top:512px"></i>
<i class="g" style="left:577px;top:512px"></i>
<i class="g" style="left:592px;top:512px"></i>
<i class="g" style="left:608px;top:512px"></i>
<span class="ln" style="right:458.1px;top:513px">122</span>
<i class="mh" style="left:536.2px;top:521px"></i>
<i class="mv" style="left:540px;top:517px"></i>
<div class="cl" style="left:623px;top:513px"><span class="p">&lt;</span><span class="t">div</span><span class="x"> </span><span class="a">class</span><span class="p">=</span><span class="s">"column"</span><span class="p">&gt;</span></div>
<i class="g" style="left:546px;top:531px"></i>
<i class="g" style="left:561px;top:531px"></i>
<i class="g" style="left:577px;top:531px"></i>
<i class="g" style="left:592px;top:531px"></i>
<i class="g" style="left:608px;top:531px"></i>
<i class="g" style="left:623px;top:531px"></i>
<span class="ln" style="right:458.1px;top:532px">123</span>
<div class="cl" style="left:638.4px;top:532px"><span class="p">&lt;</span><span class="t">label</span><span class="x"> </span><span class="a">for</span><span class="p">=</span><span class="s">"Upload passport"</span><span class="p">&gt;</span><span class="x">Upload </span></div>
<i class="g" style="left:546px;top:550px"></i>
<i class="g" style="left:561px;top:550px"></i>
<i class="g" style="left:577px;top:550px"></i>
<i class="g" style="left:592px;top:550px"></i>
<i class="g" style="left:608px;top:550px"></i>
<i class="g" style="left:623px;top:550px"></i>
<div class="cl" style="left:638.4px;top:551px"><span class="x">Passport?</span><span class="p">&lt;/</span><span class="t">label</span><span class="p">&gt;</span></div>
<div class="hatch" style="left:546px;top:569px;width:426px;height:19px"></div>
<div class="ad" style="left:546px;top:588px;width:426px"></div>
<div class="adc" style="left:684.6px;top:588px;width:287.4px"></div>
<i class="g" style="left:546px;top:588px"></i>
<i class="g" style="left:561px;top:588px"></i>
<i class="g" style="left:577px;top:588px"></i>
<i class="g" style="left:592px;top:588px"></i>
<i class="g" style="left:608px;top:588px"></i>
<i class="g" style="left:623px;top:588px"></i>
<span class="ln" style="right:458.1px;top:589px">124</span>
<i class="mh" style="left:536.2px;top:597px"></i>
<i class="mv" style="left:540px;top:593px"></i>
<div class="cl" style="left:638.4px;top:589px"><span class="p">&lt;</span><span class="t">input</span></div>
<div class="ad" style="left:546px;top:607px;width:426px"></div>
<div class="adc" style="left:738.5px;top:607px;width:233.5px"></div>
<i class="g" style="left:546px;top:607px"></i>
<i class="g" style="left:561px;top:607px"></i>
<i class="g" style="left:577px;top:607px"></i>
<i class="g" style="left:592px;top:607px"></i>
<i class="g" style="left:608px;top:607px"></i>
<i class="g" style="left:623px;top:607px"></i>
<i class="g" style="left:638px;top:607px"></i>
<span class="ln" style="right:458.1px;top:608px">125</span>
<i class="mh" style="left:536.2px;top:616px"></i>
<i class="mv" style="left:540px;top:612px"></i>
<div class="cl" style="left:653.8px;top:608px"><span class="a">type</span><span class="p">=</span><span class="s">"file"</span></div>
<div class="ad" style="left:546px;top:626px;width:426px"></div>
<div class="adc" style="left:546px;top:626px;width:130.9px"></div>
<div class="adc" style="left:807.8px;top:626px;width:164.2px"></div>
<i class="g" style="left:546px;top:626px"></i>
<i class="g" style="left:561px;top:626px"></i>
<i class="g" style="left:577px;top:626px"></i>
<i class="g" style="left:592px;top:626px"></i>
<i class="g" style="left:608px;top:626px"></i>
<i class="g" style="left:623px;top:626px"></i>
<i class="g" style="left:638px;top:626px"></i>
<span class="ln" style="right:458.1px;top:627px">126</span>
<i class="mh" style="left:536.2px;top:635px"></i>
<i class="mv" style="left:540px;top:631px"></i>
<div class="cl" style="left:653.8px;top:627px"><span class="a">id</span><span class="p">=</span><span class="s">"Upload passport"</span></div>
<div class="ad" style="left:546px;top:645px;width:426px"></div>
<div class="adc" style="left:884.8px;top:645px;width:87.2px"></div>
<i class="g" style="left:546px;top:645px"></i>
<i class="g" style="left:561px;top:645px"></i>
<i class="g" style="left:577px;top:645px"></i>
<i class="g" style="left:592px;top:645px"></i>
<i class="g" style="left:608px;top:645px"></i>
<i class="g" style="left:623px;top:645px"></i>
<i class="g" style="left:638px;top:645px"></i>
<span class="ln" style="right:458.1px;top:646px">127</span>
<i class="mh" style="left:536.2px;top:654px"></i>
<i class="mv" style="left:540px;top:650px"></i>
<div class="cl" style="left:653.8px;top:646px"><span class="a">accept</span><span class="p">=</span><span class="s">"image/png, image/jpeg"</span></div>
<div class="ad" style="left:546px;top:664px;width:426px"></div>
<div class="adc" style="left:546px;top:664px;width:100.1px"></div>
<i class="g" style="left:546px;top:664px"></i>
<i class="g" style="left:561px;top:664px"></i>
<i class="g" style="left:577px;top:664px"></i>
<i class="g" style="left:592px;top:664px"></i>
<i class="g" style="left:608px;top:664px"></i>
<i class="g" style="left:623px;top:664px"></i>
<span class="ln" style="right:458.1px;top:665px">128</span>
<i class="mh" style="left:536.2px;top:673px"></i>
<i class="mv" style="left:540px;top:669px"></i>
<div class="cl" style="left:638.4px;top:665px"><span class="p">/&gt;</span></div>
<i class="g" style="left:546px;top:683px"></i>
<i class="g" style="left:561px;top:683px"></i>
<i class="g" style="left:577px;top:683px"></i>
<i class="g" style="left:592px;top:683px"></i>
<i class="g" style="left:608px;top:683px"></i>
<i class="g" style="left:623px;top:683px"></i>
<span class="ln" style="right:458.1px;top:684px">129</span>
<i class="g" style="left:546px;top:702px"></i>
<i class="g" style="left:561px;top:702px"></i>
<i class="g" style="left:577px;top:702px"></i>
<i class="g" style="left:592px;top:702px"></i>
<i class="g" style="left:608px;top:702px"></i>
<i class="g" style="left:623px;top:702px"></i>
<span class="ln" style="right:458.1px;top:703px">130</span>
<div class="cl" style="left:638.4px;top:703px"><span class="p">&lt;</span><span class="t">label</span><span class="x"> </span><span class="a">for</span><span class="p">=</span><span class="s">"Upload ID"</span><span class="p">&gt;</span><span class="x">Upload ID?</span><span class="p">&lt;/</span><span class="t">label</span><span class="p">&gt;</span></div>
<div class="hatch" style="left:546px;top:721px;width:426px;height:19px"></div>
<div class="ad" style="left:546px;top:740px;width:426px"></div>
<div class="adc" style="left:800.1px;top:740px;width:7.7px"></div>
<i class="g" style="left:546px;top:740px"></i>
<i class="g" style="left:561px;top:740px"></i>
<i class="g" style="left:577px;top:740px"></i>
<i class="g" style="left:592px;top:740px"></i>
<i class="g" style="left:608px;top:740px"></i>
<i class="g" style="left:623px;top:740px"></i>
<span class="ln" style="right:458.1px;top:741px">131</span>
<i class="mh" style="left:536.2px;top:749px"></i>
<i class="mv" style="left:540px;top:745px"></i>
<div class="cl" style="left:638.4px;top:741px"><span class="p">&lt;</span><span class="t">input</span><span class="x"> </span><span class="a">type</span><span class="p">=</span><span class="s">"file"</span><span class="x"> </span><span class="a">id</span><span class="p">=</span><span class="s">"Upload ID"</span></div>
<div class="ad" style="left:546px;top:759px;width:426px"></div>
<div class="adc" style="left:869.4px;top:759px;width:15.4px"></div>
<i class="g" style="left:546px;top:759px"></i>
<i class="g" style="left:561px;top:759px"></i>
<i class="g" style="left:577px;top:759px"></i>
<i class="g" style="left:592px;top:759px"></i>
<i class="g" style="left:608px;top:759px"></i>
<i class="g" style="left:623px;top:759px"></i>
<i class="mh" style="left:536.2px;top:768px"></i>
<i class="mv" style="left:540px;top:764px"></i>
<div class="cl" style="left:638.4px;top:760px"><span class="a">accept</span><span class="p">=</span><span class="s">"image/png, image/jpeg"</span><span class="x"> </span><span class="p">/&gt;</span></div>
<div class="hatch" style="left:546px;top:778px;width:426px;height:19px"></div>
<i class="g" style="left:546px;top:797px"></i>
<i class="g" style="left:561px;top:797px"></i>
<i class="g" style="left:577px;top:797px"></i>
<i class="g" style="left:592px;top:797px"></i>
<i class="g" style="left:608px;top:797px"></i>
<i class="g" style="left:623px;top:797px"></i>
<span class="ln" style="right:458.1px;top:798px">132</span>
<i class="g" style="left:546px;top:816px"></i>
<i class="g" style="left:561px;top:816px"></i>
<i class="g" style="left:577px;top:816px"></i>
<i class="g" style="left:592px;top:816px"></i>
<i class="g" style="left:608px;top:816px"></i>
<i class="g" style="left:623px;top:816px"></i>
<span class="ln" style="right:458.1px;top:817px">133</span>
<div class="cl" style="left:638.4px;top:817px"><span class="p">&lt;</span><span class="t">label</span><span class="x"> </span><span class="a">for</span><span class="p">=</span><span class="s">"Upload BSN"</span><span class="p">&gt;</span><span class="x">Upload BSN?</span><span class="p">&lt;/</span></div>
<i class="g" style="left:546px;top:835px"></i>
<i class="g" style="left:561px;top:835px"></i>
<i class="g" style="left:577px;top:835px"></i>
<i class="g" style="left:592px;top:835px"></i>
<i class="g" style="left:608px;top:835px"></i>
<i class="g" style="left:623px;top:835px"></i>
<div class="cl" style="left:638.4px;top:836px"><span class="t">label</span><span class="p">&gt;</span></div>
<div class="ad" style="left:546px;top:854px;width:426px"></div>
<div class="adc" style="left:800.1px;top:854px;width:7.7px"></div>
<i class="g" style="left:546px;top:854px"></i>
<i class="g" style="left:561px;top:854px"></i>
<i class="g" style="left:577px;top:854px"></i>
<i class="g" style="left:592px;top:854px"></i>
<i class="g" style="left:608px;top:854px"></i>
<i class="g" style="left:623px;top:854px"></i>
<span class="ln" style="right:458.1px;top:855px">134</span>
<i class="mh" style="left:536.2px;top:863px"></i>
<i class="mv" style="left:540px;top:859px"></i>
<div class="cl" style="left:638.4px;top:855px"><span class="p">&lt;</span><span class="t">input</span><span class="x"> </span><span class="a">type</span><span class="p">=</span><span class="s">"file"</span><span class="x"> </span><span class="a">id</span><span class="p">=</span><span class="s">"Upload BSN"</span></div>
<div style="position:absolute;left:959px;top:27px;width:13px;height:2px;background:#d9d9d9"></div>
<div style="position:absolute;left:980px;top:661px;width:10px;height:56px;background:#3e4451"></div>

</div></div>
</div>
<div id="hd">
<svg style="position:absolute;left:-4px;top:4px" width="16" height="16" viewBox="0 0 16 16"><path fill="#c5c5c5" d="M7.976 10.072l4.357-4.357.62.618L8.284 11h-.618L3 6.333l.619-.618 4.357 4.357z"/></svg>
<svg style="position:absolute;left:18px;top:0" width="20" height="26" viewBox="18 0 20 26"><path d="M26.7 7.3 L22.8 11.45 L26.7 15.6 M29.4 7.3 L33.3 11.45 L29.4 15.6" fill="none" stroke="#e37933" stroke-width="1.5"/></svg>
<span class="ttl">create.html</span><span class="sub">website\html</span>
<svg style="position:absolute;left:958.1px;top:4.3px" width="16" height="16" viewBox="0 0 16 16"><path fill="#c5c5c5" fill-rule="evenodd" clip-rule="evenodd" d="M6 5.914l2.06-2.06v-.708L5.915 1l-.707.707.043.043.25.25 1 1h-3a2.5 2.5 0 0 0 0 5H4V7h-.5a1.5 1.5 0 1 1 0-3h3L5.207 5.293 5.914 6 6 5.914zM11 2H8.328l-1-1H12l.71.29 3 3L16 5v9l-1 1H6l-1-1V6.5l1 .847V14h9V6h-4V2zm1 0v3h3l-3-3z"/></svg>
</div>
<div id="edge"><i></i></div>
</body></html>
